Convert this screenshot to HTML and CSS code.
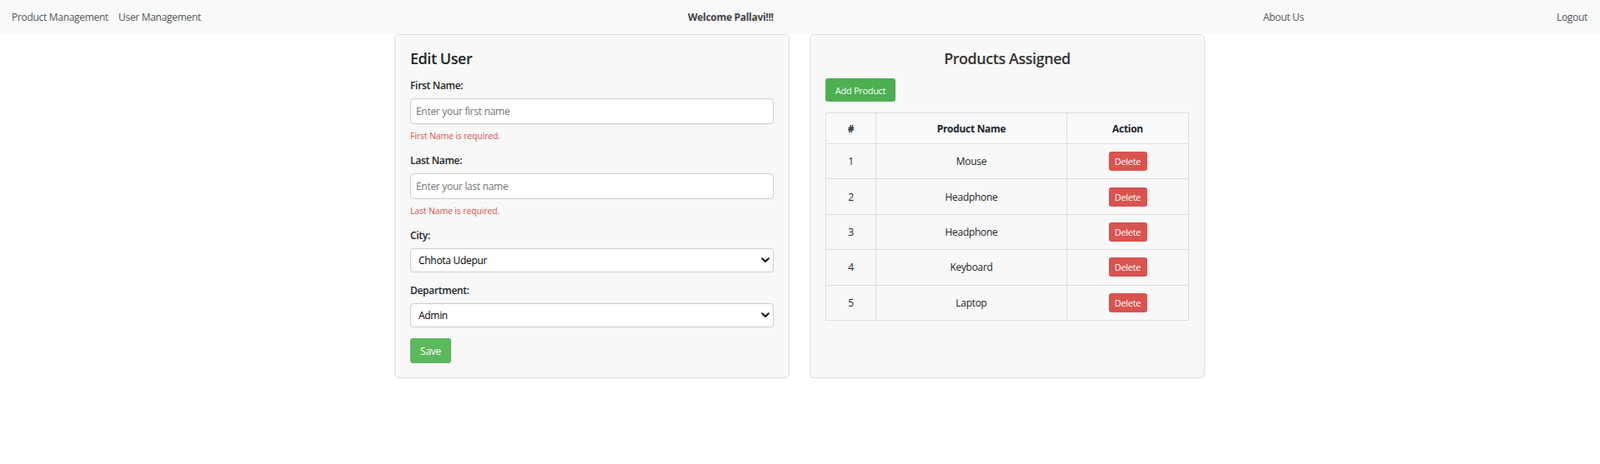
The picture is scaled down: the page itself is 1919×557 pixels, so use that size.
FILE: index.html
```html
<!DOCTYPE html>
<html lang="en">
<head>
<meta charset="utf-8">
<title>Edit User</title>
<link rel="stylesheet" href="styles.css">
</head>
<body>
<nav class="navbar">
  <div class="nav-left">
    <a class="nav-link" href="#">Product Management</a>
    <a class="nav-link" href="#">User Management</a>
  </div>
  <div class="nav-welcome">Welcome Pallavi!!!</div>
  <div class="nav-about"><a class="nav-link" href="#">About Us</a></div>
  <div class="nav-logout"><a class="nav-link" href="#">Logout</a></div>
</nav>

<main class="content">
  <section class="card">
    <h2 class="card-title">Edit User</h2>
    <div class="form-group">
      <label class="form-label">First Name:</label>
      <input class="form-control" type="text" placeholder="Enter your first name">
      <div class="error">First Name is required.</div>
    </div>
    <div class="form-group">
      <label class="form-label">Last Name:</label>
      <input class="form-control" type="text" placeholder="Enter your last name">
      <div class="error">Last Name is required.</div>
    </div>
    <div class="form-group">
      <label class="form-label">City:</label>
      <div class="select-wrap">
        <select class="form-control form-select"><option>Chhota Udepur</option></select>
        <svg class="chevron" width="10" height="7" viewBox="0 0 10 7"><path d="M1.2 1.3 L5 5 L8.8 1.3" fill="none" stroke="#111" stroke-width="2" stroke-linecap="round" stroke-linejoin="round"/></svg>
      </div>
    </div>
    <div class="form-group last">
      <label class="form-label">Department:</label>
      <div class="select-wrap">
        <select class="form-control form-select"><option>Admin</option></select>
        <svg class="chevron" width="10" height="7" viewBox="0 0 10 7"><path d="M1.2 1.3 L5 5 L8.8 1.3" fill="none" stroke="#111" stroke-width="2" stroke-linecap="round" stroke-linejoin="round"/></svg>
      </div>
    </div>
    <button class="btn btn-save" type="button">Save</button>
  </section>

  <section class="card">
    <h2 class="card-title center">Products Assigned</h2>
    <button class="btn btn-add" type="button">Add Product</button>
    <table class="table">
      <thead>
        <tr><th class="col-num">#</th><th class="col-name">Product Name</th><th>Action</th></tr>
      </thead>
      <tbody>
        <tr><td>1</td><td>Mouse</td><td><button class="btn btn-delete" type="button">Delete</button></td></tr>
        <tr><td>2</td><td>Headphone</td><td><button class="btn btn-delete" type="button">Delete</button></td></tr>
        <tr><td>3</td><td>Headphone</td><td><button class="btn btn-delete" type="button">Delete</button></td></tr>
        <tr><td>4</td><td>Keyboard</td><td><button class="btn btn-delete" type="button">Delete</button></td></tr>
        <tr><td>5</td><td>Laptop</td><td><button class="btn btn-delete" type="button">Delete</button></td></tr>
      </tbody>
    </table>
  </section>
</main>
</body>
</html>
```
FILE: styles.css
```css
* { box-sizing: border-box; }

body {
  margin: 0;
  background: #fff;
  font-family: "Open Sans", "Noto Sans", sans-serif;
  color: #212529;
  letter-spacing: -0.3px;
}

.navbar {
  height: 41px;
  background: #f8f9fa;
  display: flex;
  align-items: center;
  padding: 0 15px 0 14px;
  font-size: 12px;
}

.nav-link {
  color: #555;
  text-decoration: none;
}

.nav-left {
  width: 811px;
  display: flex;
  gap: 12px;
}

.nav-welcome {
  width: 690px;
  font-weight: 700;
  color: #444;
}

.nav-about { flex: 1; }

.content {
  display: flex;
  justify-content: center;
  gap: 24px;
  padding-right: 1px;
}

.card {
  width: 474px;
  background: #f8f8f8;
  border: 1px solid #ddd;
  border-radius: 5px;
  padding: 15px 18px 17px 18px;
}

.card-title {
  margin: 0 0 10px;
  font-size: 18px;
  line-height: 26px;
  font-weight: 600;
  letter-spacing: -0.45px;
  color: #212529;
}

.card-title.center {
  text-align: center;
  color: #333;
  margin-bottom: 11px;
}

.form-group { margin-bottom: 12px; }
.form-group.last { margin-bottom: 13px; }

.form-label {
  display: block;
  font-size: 12px;
  line-height: 20px;
  font-weight: 600;
  margin-bottom: 5px;
}

.form-control {
  display: block;
  width: 100%;
  height: 31px;
  border: 1px solid #ccc;
  border-radius: 4px;
  background: #fff;
  padding: 0 6px;
  font-family: inherit;
  font-size: 12px;
  letter-spacing: -0.3px;
  color: #000;
}

.form-control::placeholder { color: #757575; }

.select-wrap {
  position: relative;
}

.form-select {
  -webkit-appearance: none;
  appearance: none;
  height: 29px;
  padding: 0 9px;
  color: #000;
}

.chevron {
  position: absolute;
  right: 5px;
  top: 11px;
}

.error {
  color: #d9534f;
  font-size: 10.5px;
  line-height: 16px;
  letter-spacing: -0.15px;
  margin-top: 6px;
}

.btn {
  border: none;
  border-radius: 3px;
  color: #fff;
  font-family: inherit;
  letter-spacing: -0.3px;
  cursor: pointer;
}

.btn-save {
  display: block;
  width: 49px;
  height: 30px;
  background: #5cb85c;
  font-size: 12px;
  padding: 0;
}

.btn-add {
  display: block;
  height: 28px;
  width: 84px;
  padding: 0;
  background: #4caf50;
  font-size: 11px;
}

.table {
  width: 100%;
  margin-top: 13px;
  border-collapse: collapse;
  font-size: 12px;
  color: #212529;
}

.table th, .table td {
  border: 1px solid #ddd;
  text-align: center;
  vertical-align: middle;
  padding: 0;
}

.table th {
  height: 37px;
  font-weight: 700;
  background: #f8f9fa;
}

.table td { height: 42.4px; }

.col-num { width: 60px; }
.col-name { width: 229px; }

.btn-delete {
  height: 23px;
  width: 46px;
  padding: 0;
  background: #d9534f;
  font-size: 11px;
}
```
